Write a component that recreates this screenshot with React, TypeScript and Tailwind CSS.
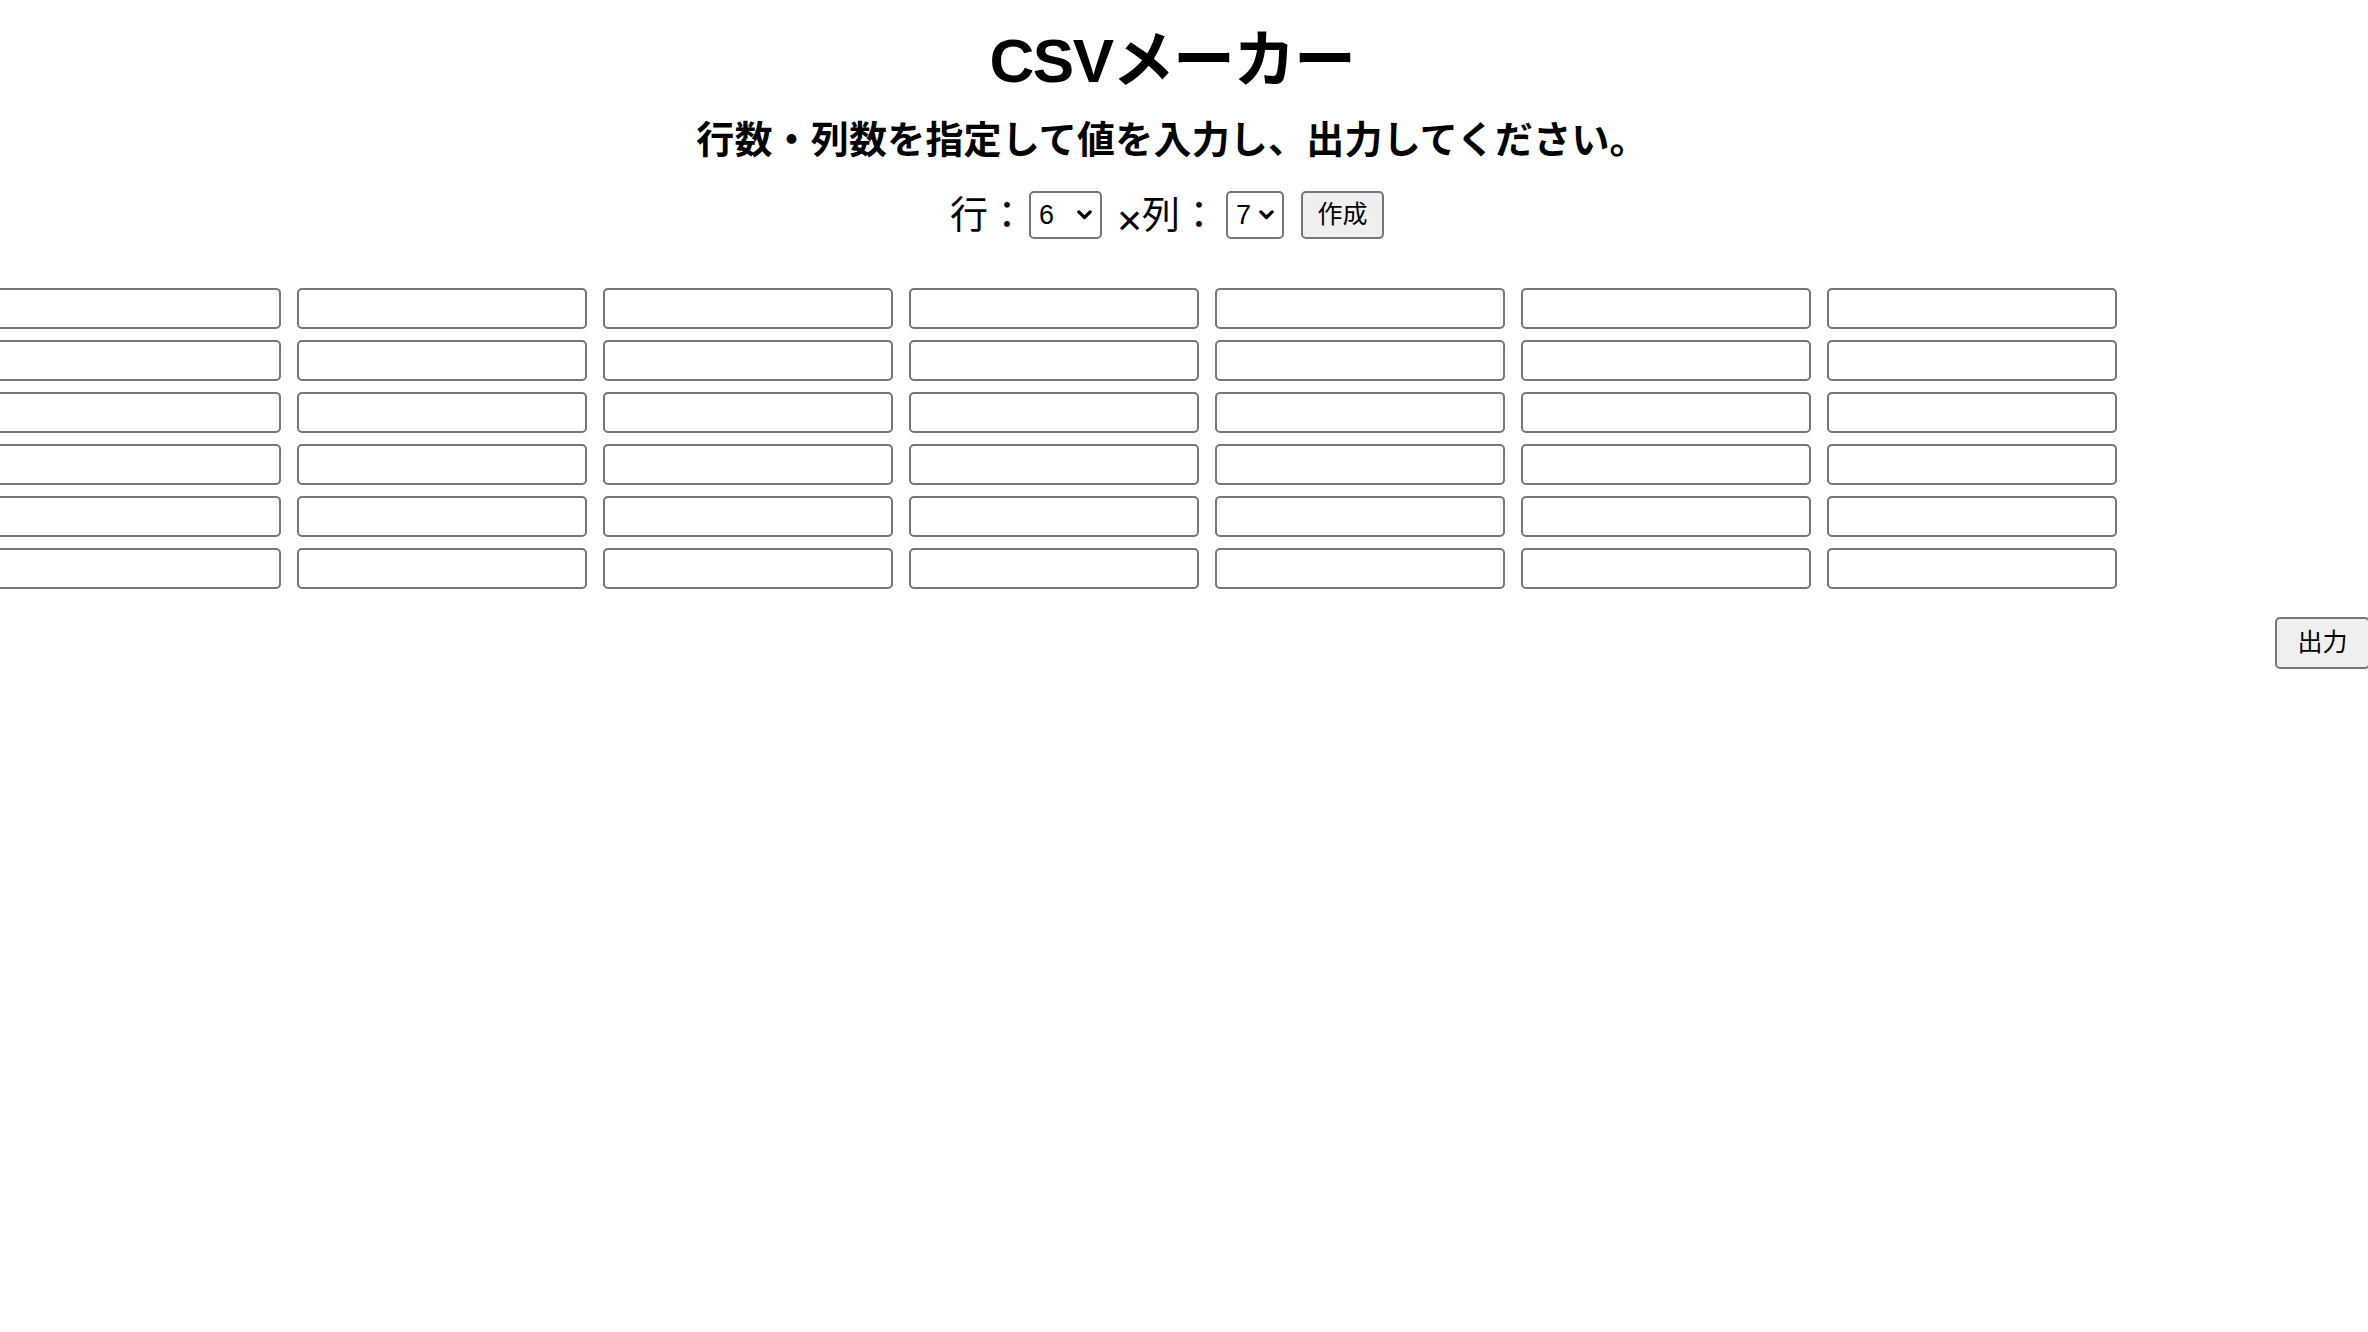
import { useState } from "react";

const font = "font-['Liberation_Sans','Noto_Sans_CJK_JP',sans-serif]";

function Chevron() {
  return (
    <svg viewBox="0 0 12 8" className="w-[15px] h-[10px]" fill="none">
      <path d="M1.5 1.5 L6 6 L10.5 1.5" stroke="#000" strokeWidth="2.6" strokeLinecap="round" strokeLinejoin="round" />
    </svg>
  );
}

function NumberSelect({ value, onChange, max, width }: { value: number; onChange: (v: number) => void; max: number; width: string }) {
  return (
    <label className={`relative flex items-center h-[48px] ${width} border-2 border-[#767676] rounded-[5px] bg-white`}>
      <select
        value={value}
        onChange={(e) => onChange(Number(e.target.value))}
        className={`appearance-none w-full h-full bg-transparent pl-[8px] pr-[24px] text-[27px] text-black outline-none ${font}`}
      >
        {Array.from({ length: max }, (_, i) => (
          <option key={i + 1} value={i + 1}>
            {i + 1}
          </option>
        ))}
      </select>
      <span className="pointer-events-none absolute right-[8px] top-1/2 -translate-y-1/2 flex">
        <Chevron />
      </span>
    </label>
  );
}

export default function App() {
  const [rows, setRows] = useState(6);
  const [cols, setCols] = useState(7);
  const [grid, setGrid] = useState({ rows: 6, cols: 7 });

  return (
    <div className={`min-h-screen w-full bg-white text-black overflow-hidden ${font}`}>
      <div className="flex flex-col items-center pr-[24px]">
        {/* Title */}
        <h1 className="mt-[29px] h-[64px] leading-[64px] text-[62px] font-bold tracking-[-1.5px]">CSVメーカー</h1>
        <p className="mt-[28px] h-[38px] leading-[38px] text-[38px] font-bold tracking-[0.2px]">
          行数・列数を指定して値を入力し、出力してください。
        </p>

        {/* Size controls */}
        <div className="mt-[32px] h-[48px] flex items-center text-[38px] mr-[10px]">
          <span className="leading-none">行：</span>
          <div className="ml-[3px] flex">
            <NumberSelect value={rows} onChange={setRows} max={10} width="w-[73px]" />
          </div>
          <span className="ml-[15px] leading-none text-[43px] translate-y-[5px]">×</span>
          <span className="leading-none">列：</span>
          <div className="ml-[8px] flex">
            <NumberSelect value={cols} onChange={setCols} max={9} width="w-[58px]" />
          </div>
          <button
            onClick={() => setGrid({ rows, cols })}
            className="ml-[17px] h-[48px] w-[83px] rounded-[5px] border-2 border-[#767676] bg-[#efefef] text-[25px] text-black"
          >
            作成
          </button>
        </div>
      </div>

      {/* Input grid */}
      <div className="mt-[49px] ml-[-9px] flex flex-col gap-[11px]">
        {Array.from({ length: grid.rows }, (_, r) => (
          <div key={r} className="flex gap-[16px]">
            {Array.from({ length: grid.cols }, (_, c) => (
              <input
                key={c}
                type="text"
                className="w-[290px] h-[41px] shrink-0 rounded-[5px] border-2 border-[#767676] bg-white px-[4px] text-[25px] outline-none"
              />
            ))}
          </div>
        ))}
      </div>

      <div className="mt-[28px] flex justify-end mr-[-2px]">
        <button className="h-[52px] w-[95px] rounded-[5px] border-2 border-[#767676] bg-[#efefef] text-[25px] text-black">
          出力
        </button>
      </div>
    </div>
  );
}
